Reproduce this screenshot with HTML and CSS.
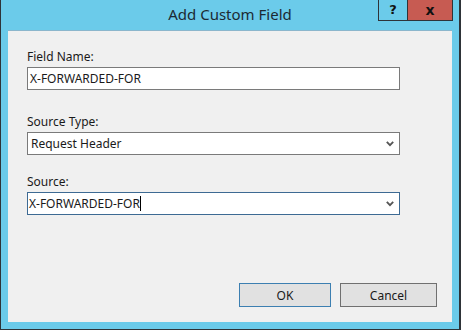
FILE: index.html
```html
<!DOCTYPE html>
<html lang="en">
<head>
    <meta charset="UTF-8">
    <title>Add Custom Field</title>
    <link rel="stylesheet" href="styles.css">
</head>
<body>
    <div class="window">
        <div class="title-bar">
            <span></span>
            <span class="title-text">Add Custom Field</span>
            <div class="caption-buttons">
                <button class="caption-btn help-btn" aria-label="Help">?</button>
                <button class="caption-btn close-btn" aria-label="Close">x</button>
            </div>
        </div>

        <main class="client">
            <div class="field field-name">
                <label class="field-label">Field Name:</label>
                <div class="text-box">X-FORWARDED-FOR</div>
            </div>

            <div class="field field-type">
                <label class="field-label">Source Type:</label>
                <div class="combo">
                    <span class="combo-value">Request Header</span>
                    <svg class="chevron" viewBox="0 0 8 6"><polyline points="0.8 0.8 4 4.2 7.2 0.8" fill="none" stroke="currentColor" stroke-width="1.8"></polyline></svg>
                </div>
            </div>

            <div class="field field-source">
                <label class="field-label">Source:</label>
                <div class="combo combo-focus">
                    <span class="combo-value editable">X-FORWARDED-FOR<span class="caret"></span></span>
                    <svg class="chevron" viewBox="0 0 8 6"><polyline points="0.8 0.8 4 4.2 7.2 0.8" fill="none" stroke="currentColor" stroke-width="1.8"></polyline></svg>
                </div>
            </div>

            <footer class="dialog-actions">
                <button class="dlg-btn dlg-btn-default">OK</button>
                <button class="dlg-btn dlg-btn-cancel">Cancel</button>
            </footer>
        </main>
    </div>
</body>
</html>
```

FILE: styles.css
```css
:root {
    --frame-blue: #6bcbea;
    --frame-dark: #2e3338;
    --client-bg: #f0f0f0;
    --box-border: #7a7a7a;
    --focus-border: #3d6a93;
    --text: #1a1a1a;
    --font-ui: 'Noto Sans', 'Open Sans', sans-serif;
}
* { margin: 0; padding: 0; box-sizing: border-box; }
body { width: 461px; height: 330px; overflow: hidden; font-family: var(--font-ui); color: var(--text); background: var(--frame-blue); }

.window {
    width: 461px; height: 330px; display: flex; flex-direction: column;
    background: var(--frame-blue);
    border-left: 1px solid var(--frame-dark); border-right: 2px solid var(--frame-dark); border-bottom: 1px solid var(--frame-dark);
}

/* title bar */
.title-bar { height: 30px; display: grid; grid-template-columns: 1fr auto 1fr; align-items: start; }
.title-text { font-size: 15px; line-height: 30px; color: #1c2a33; margin-top: -1px; }
.caption-buttons { display: flex; justify-content: flex-end; padding-right: 6px; }
.caption-btn {
    height: 21px; border: 1px solid var(--frame-dark); border-top: none;
    font-family: 'DejaVu Sans', sans-serif; font-weight: 700; font-size: 13px; line-height: 18px; color: #111;
}
.help-btn { width: 29px; background: var(--frame-blue); border-right: none; }
.close-btn { width: 46px; background: #c75b52; font-size: 14px; }

/* client area */
.client {
    flex: 1; margin: 0 7px 7px 7px; background: var(--client-bg);
    border-top: 1px solid #8bb6cc;
    display: flex; flex-direction: column; padding: 18px 0 15px 19px;
}
.field { width: 373px; }
.field-label { display: block; font-size: 12px; line-height: 16px; margin-bottom: 2px; }
.field-type { margin-top: 24px; }
.field-source { margin-top: 19px; }

.text-box, .combo {
    height: 23px; background: #fff; border: 1px solid var(--box-border);
    font-size: 12px; line-height: 21px; padding-left: 2px;
}
.combo { display: flex; align-items: center; justify-content: space-between; padding-left: 3px; padding-right: 5px; }
.combo-focus { border-color: var(--focus-border); padding-left: 1px; }
.combo-value { white-space: nowrap; display: flex; align-items: center; }
.caret { display: inline-block; width: 1px; height: 15px; background: #000; margin-left: 0; }
.chevron { width: 8px; height: 6px; color: #555; margin-top: 1px; }

/* buttons */
.dialog-actions { margin-top: auto; display: flex; justify-content: flex-end; gap: 9px; padding-right: 15px; }
.dlg-btn {
    height: 24px; background: #e1e1e1; border: 1px solid #707070;
    font-family: var(--font-ui); font-size: 12px; color: var(--text);
}
.dlg-btn-default { width: 92px; border-color: #3c7fb1; }
.dlg-btn-cancel { width: 97px; }
```
